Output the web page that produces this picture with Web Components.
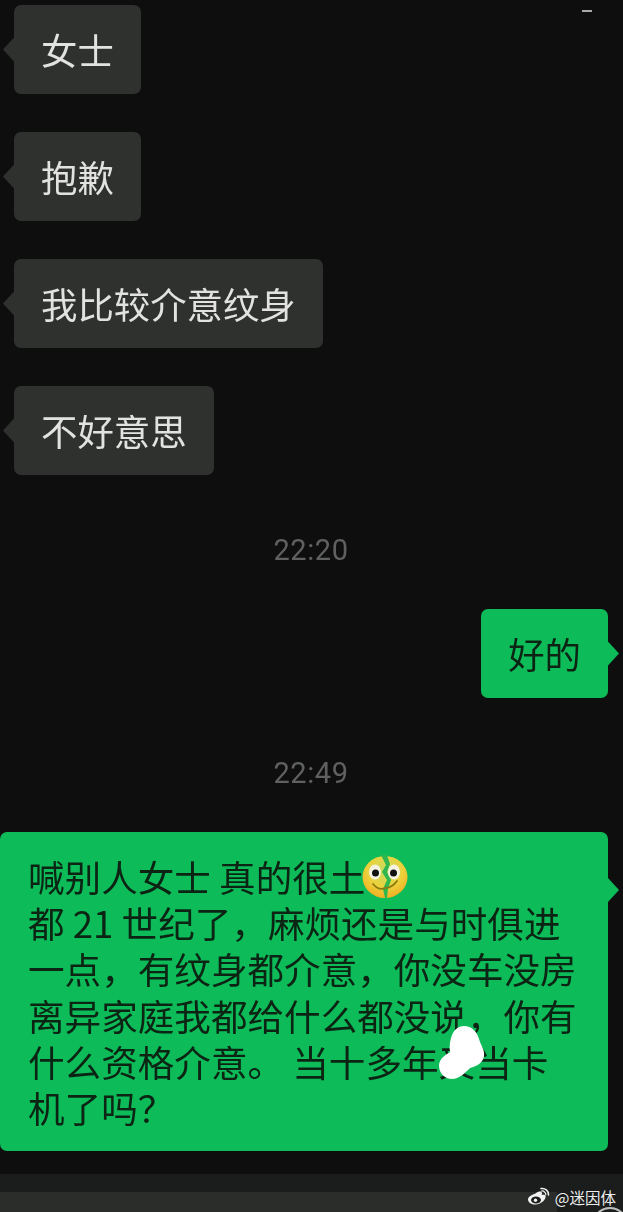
<!DOCTYPE html>
<html lang="zh-CN">
<head>
<meta charset="utf-8">
<title>chat</title>
<style>
  html, body { margin: 0; background: #0e0e0f; }
</style>
</head>
<body>
<chat-screen>
  <chat-bubble style="margin-top:5px">女士</chat-bubble>
  <chat-bubble style="margin-top:38px">抱歉</chat-bubble>
  <chat-bubble style="margin-top:38px">我比较介意纹身</chat-bubble>
  <chat-bubble style="margin-top:38px">不好意思</chat-bubble>
  <chat-time style="margin-top:60px">22:20</chat-time>
  <chat-bubble mine style="margin-top:44px">好的</chat-bubble>
  <chat-time style="margin-top:60px">22:49</chat-time>
  <chat-bubble mine wide style="margin-top:44px">喊别人女士 真的很土<crack-emoji></crack-emoji><br>都 21 世纪了，麻烦还是与时俱进<br>一点，有纹身都介意，你没车没房<br>离异家庭我都给什么都没说，你有<br>什么资格介意。 当十多年又当卡<br>机了吗？<white-blot></white-blot></chat-bubble>
  <chat-footer></chat-footer>
</chat-screen>

<script>
class ChatScreen extends HTMLElement {
  constructor() {
    super();
    this.attachShadow({ mode: 'open' });
    this.shadowRoot.innerHTML = `
      <style>
        :host {
          display: flex;
          flex-direction: column;
          position: relative;
          width: 623px;
          height: 1212px;
          overflow: hidden;
          background: #0e0e0f;
          font-family: "Noto Sans CJK SC", "Noto Sans", sans-serif;
        }
        .dash {
          position: absolute;
          left: 582px;
          top: 10px;
          width: 10px;
          height: 2px;
          background: #a9a9a9;
        }
      </style>
      <div class="dash"></div>
      <slot></slot>
    `;
  }
}

class ChatBubble extends HTMLElement {
  constructor() {
    super();
    this.attachShadow({ mode: 'open' });
    this.shadowRoot.innerHTML = `
      <style>
        :host {
          display: block;
          position: relative;
          align-self: flex-start;
          box-sizing: border-box;
          margin-left: 14px;
          padding: 21px 27px;
          border-radius: 7px;
          background: #2e312e;
          color: #e2e3e1;
          font-size: 36.4px;
          line-height: 47px;
          white-space: nowrap;
          filter: blur(.35px);
        }
        :host([mine]) {
          align-self: flex-end;
          margin-left: 0;
          margin-right: 15px;
          background: #0dbb58;
          color: #0b2414;
        }
        :host([wide]) {
          align-self: flex-start;
          width: 608px;
          height: 319px;
          padding: 22px 0 0 28px;
          font-size: 36.6px;
          line-height: 46.2px;
        }
        .tail {
          position: absolute;
          top: 50%;
          left: -11px;
          width: 11px;
          height: 24px;
          margin-top: -12px;
          background: inherit;
          clip-path: polygon(100% 0, 0 50%, 100% 100%);
        }
        :host([mine]) .tail {
          left: auto;
          right: -11px;
          clip-path: polygon(0 0, 100% 50%, 0 100%);
        }
        :host([wide]) .tail {
          top: 46px;
          margin-top: 0;
        }
      </style>
      <span class="tail"></span>
      <slot></slot>
    `;
  }
}

class ChatTime extends HTMLElement {
  constructor() {
    super();
    this.attachShadow({ mode: 'open' });
    this.shadowRoot.innerHTML = `
      <style>
        :host {
          display: block;
          height: 30px;
          padding-right: 1px;
          color: #5f6060;
          font-family: Roboto, "Noto Sans", sans-serif;
          font-size: 29px;
          line-height: 30px;
          letter-spacing: .6px;
          text-align: center;
          filter: blur(.35px);
        }
      </style>
      <slot></slot>
    `;
  }
}

class CrackEmoji extends HTMLElement {
  constructor() {
    super();
    this.attachShadow({ mode: 'open' });
    this.shadowRoot.innerHTML = `
      <style>
        :host {
          display: inline-block;
          width: 46px;
          height: 44px;
          vertical-align: -7px;
          margin-left: -3px;
        }
        svg { display: block; }
      </style>
      <svg width="46" height="44" viewBox="0 0 46 44">
        <defs>
          <radialGradient id="face" cx=".5" cy=".35" r=".7">
            <stop offset="0" stop-color="#c6dc62"/>
            <stop offset=".55" stop-color="#ecd23c"/>
            <stop offset="1" stop-color="#f2a81e"/>
          </radialGradient>
        </defs>
        <ellipse cx="23" cy="22" rx="22.5" ry="21" fill="url(#face)"/>
        <path d="M19 0 L24 10 L20 17 L25 25 L21 34 L23 43 L25 43 L26 34 L29 25 L25 17 L28 9 L25 0 Z" fill="#2fb64f"/>
        <ellipse cx="13" cy="17" rx="6" ry="7.5" fill="#f7f3e2"/>
        <ellipse cx="32" cy="17" rx="6" ry="7.5" fill="#f7f3e2"/>
        <circle cx="13.500" cy="18" r="3.500" fill="#111"/>
        <circle cx="31.500" cy="18" r="3.500" fill="#111"/>
        <path d="M11 29 Q17 36 23 33 Q30 33 35 26" fill="none" stroke="#8a7a10" stroke-width="1.800" stroke-linecap="round"/>
      </svg>
    `;
  }
}

class WhiteBlot extends HTMLElement {
  constructor() {
    super();
    this.attachShadow({ mode: 'open' });
    this.shadowRoot.innerHTML = `
      <style>
        :host {
          position: absolute;
          left: 439px;
          top: 194px;
          width: 46px;
          height: 56px;
        }
        svg { display: block; }
      </style>
      <svg width="46" height="56" viewBox="0 0 46 56">
        <path d="M25 0 C33 0 38 6 40 13 C42 20 46 24 45 30 C44 37 38 40 31 42 C26 47 20 53 13 53 C6 53 0 47 0 40 C0 33 6 29 11 26 C10 20 11 14 13 9 C15 4 19 0 25 0 Z" fill="#fff"/>
      </svg>
    `;
  }
}

class ChatFooter extends HTMLElement {
  constructor() {
    super();
    this.attachShadow({ mode: 'open' });
    this.shadowRoot.innerHTML = `
      <style>
        :host {
          display: block;
          position: relative;
          flex: 1;
          margin-top: 23px;
          background: #1b1d1c;
          overflow: hidden;
        }
        .input {
          width: 557px;
          height: 21px;
          margin-top: 18px;
          background: #2b2d2b;
        }
        .mark {
          position: absolute;
          right: 7px;
          top: 12px;
          display: flex;
          align-items: center;
          gap: 5px;
          color: #eeeeee;
          font-size: 15.500px;
          line-height: 22px;
        }
        .ring {
          position: absolute;
          left: 592px;
          top: 33px;
          width: 36px;
          height: 36px;
          box-sizing: border-box;
          border: 2px solid #bdbdbd;
          border-radius: 50%;
        }
        svg { display: block; }
      </style>
      <div class="input"></div>
      <div class="ring"></div>
      <div class="mark">
        <svg width="23" height="20" viewBox="0 0 23 20">
          <path d="M8.500 6.500 C11 4.500 13.500 4 14.500 5 C15.300 5.800 15 7 14.700 8 C16.500 7.500 18.300 7.700 18.600 9.200 C19 12.800 13.500 17.500 8.500 17.500 C4.500 17.500 1 15.500 1 12.500 C1 10.800 3 8.300 8.500 6.500 Z" fill="#f2f2f2"/>
          <ellipse cx="9" cy="13" rx="5" ry="3.500" fill="#1b1d1c"/>
          <circle cx="8.500" cy="13.300" r="1.700" fill="#f2f2f2"/>
          <path d="M14 1.500 C18 .8 21.800 3.800 21.500 8" fill="none" stroke="#f2f2f2" stroke-width="1.500" stroke-linecap="round"/>
          <path d="M14.500 4 C16.800 3.700 19 5.500 18.800 7.800" fill="none" stroke="#f2f2f2" stroke-width="1.200" stroke-linecap="round"/>
        </svg>
        <span>@迷因体</span>
      </div>
    `;
  }
}

customElements.define('chat-screen', ChatScreen);
customElements.define('chat-bubble', ChatBubble);
customElements.define('chat-time', ChatTime);
customElements.define('crack-emoji', CrackEmoji);
customElements.define('white-blot', WhiteBlot);
customElements.define('chat-footer', ChatFooter);
</script>
</body>
</html>
